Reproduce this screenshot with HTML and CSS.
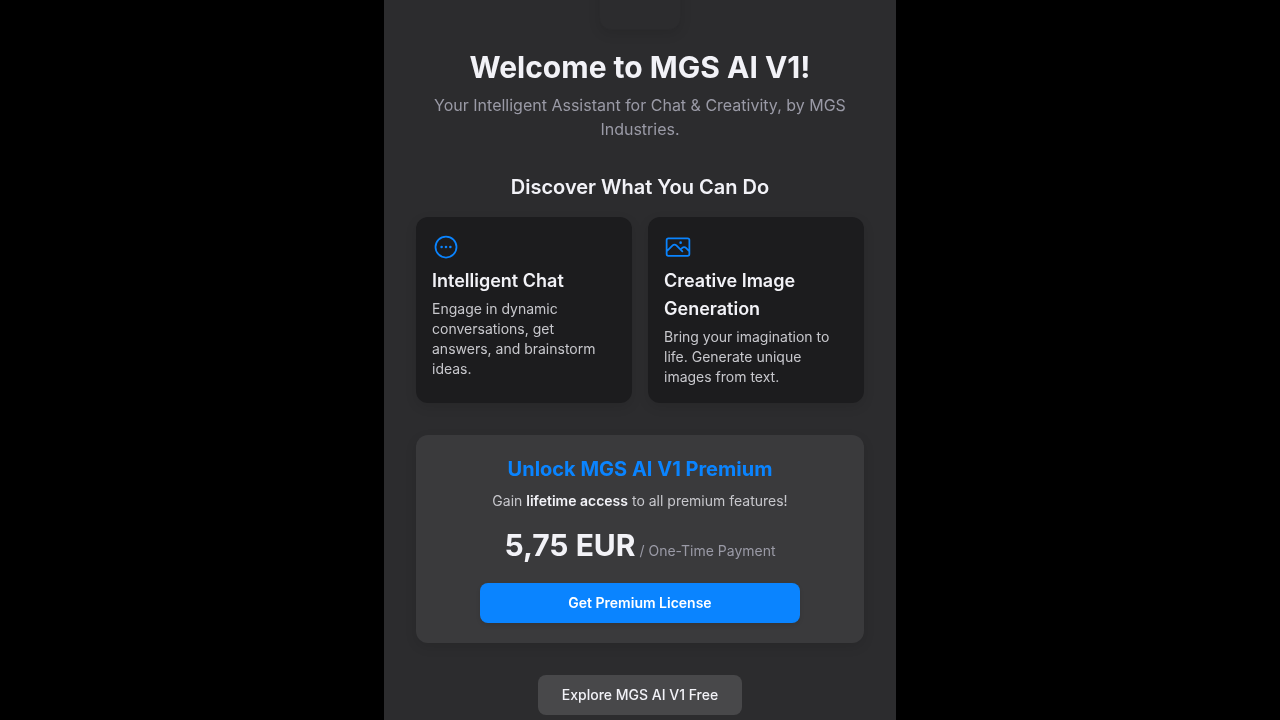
FILE: index.html
```html
<!DOCTYPE html>
<html lang="en">
<head>
<meta charset="utf-8">
<title>Welcome to MGS AI V1!</title>
<link rel="stylesheet" href="styles.css">
</head>
<body>
<main class="panel">
  <div class="content">
  <div class="logo"></div>
  <h1 class="title">Welcome to MGS AI V1!</h1>
  <p class="subtitle">Your Intelligent Assistant for Chat &amp; Creativity, by MGS Industries.</p>
  <h2 class="discover">Discover What You Can Do</h2>
  <section class="features">
    <article class="card">
      <svg class="icon" viewBox="0 0 24 24" fill="none" stroke="currentColor" stroke-width="1.5" stroke-linecap="round" stroke-linejoin="round"><path d="M8.625 12a.375.375 0 11-.75 0 .375.375 0 01.75 0zm0 0H8.25m4.125 0a.375.375 0 11-.75 0 .375.375 0 01.75 0zm0 0H12m4.125 0a.375.375 0 11-.75 0 .375.375 0 01.75 0zm0 0h-.375M21 12a9 9 0 11-18 0 9 9 0 0118 0z"/></svg>
      <h3 class="card-title">Intelligent Chat</h3>
      <p class="card-text">Engage in dynamic conversations, get answers, and brainstorm ideas.</p>
    </article>
    <article class="card">
      <svg class="icon" viewBox="0 0 24 24" fill="none" stroke="currentColor" stroke-width="1.5" stroke-linecap="round" stroke-linejoin="round"><path d="M2.25 15.75l5.159-5.159a2.25 2.25 0 013.182 0l5.159 5.159m-1.5-1.5l1.409-1.409a2.25 2.25 0 013.182 0l2.909 2.909m-18 3.75h16.5a1.5 1.5 0 001.5-1.5V6a1.5 1.5 0 00-1.5-1.5H3.75A1.5 1.5 0 002.25 6v12a1.5 1.5 0 001.5 1.5zm10.5-11.25h.008v.008h-.008V8.25zm.375 0a.375.375 0 11-.75 0 .375.375 0 01.75 0z"/></svg>
      <h3 class="card-title">Creative Image Generation</h3>
      <p class="card-text">Bring your imagination to life. Generate unique images from text.</p>
    </article>
  </section>
  <section class="premium">
    <h2 class="premium-title">Unlock MGS AI V1 Premium</h2>
    <p class="premium-text">Gain <strong>lifetime access</strong> to all premium features!</p>
    <p class="price"><span class="amount">5,75 EUR</span> <span class="term">/ One-Time Payment</span></p>
    <button class="btn btn-primary" type="button">Get Premium License</button>
  </section>
  <button class="btn btn-secondary" type="button">Explore MGS AI V1 Free</button>
  </div>
</main>
</body>
</html>
```

FILE: styles.css
```css
* { box-sizing: border-box; margin: 0; padding: 0; }
html, body { height: 100%; }
body {
  background: #000;
  display: flex;
  justify-content: center;
  overflow: hidden;
  font-family: Inter, "Liberation Sans", sans-serif;
  color: #f2f2f7;
}
.panel {
  width: 512px;
  height: 720px;
  flex: none;
  background: #2c2c2e;
  display: flex;
  flex-direction: column;
  justify-content: flex-end;
  overflow: hidden;
}
.content {
  flex: none;
  padding: 0 32px 5px;
  display: flex;
  flex-direction: column;
  align-items: center;
  text-align: center;
  will-change: transform;
}
.logo {
  width: 82px;
  height: 80px;
  flex: none;
  border-radius: 12px;
  background: #2c2c2e;
  border: 1px solid #2a2a2c;
  box-shadow: 0 4px 12px rgba(0, 0, 0, 0.1);
  margin-bottom: 17px;
}
.title { font-size: 30px; line-height: 40px; font-weight: 700; margin-bottom: 6px; }
.subtitle { font-size: 16px; line-height: 24px; color: #9a9aa6; margin-bottom: 32px; }
.discover { font-size: 20px; line-height: 28px; font-weight: 600; margin-bottom: 16px; }
.features {
  width: 100%;
  display: grid;
  grid-template-columns: 1fr 1fr;
  gap: 16px;
  text-align: left;
  margin-bottom: 32px;
}
.card {
  background: #1c1c1e;
  border-radius: 12px;
  padding: 16px;
  box-shadow: 0 4px 12px rgba(0, 0, 0, 0.1);
}
.icon { display: block; width: 28px; height: 28px; color: #0a84ff; margin-bottom: 6px; }
.card-title { font-size: 18px; line-height: 28px; font-weight: 600; margin-bottom: 4px; }
.card-text { font-size: 14px; line-height: 20px; color: #c7c7cc; }
.premium {
  width: 100%;
  background: #3a3a3c;
  border-radius: 12px;
  padding: 20px;
  display: flex;
  flex-direction: column;
  align-items: center;
  box-shadow: 0 4px 12px rgba(0, 0, 0, 0.1);
  margin-bottom: 32px;
}
.premium-title { font-size: 20px; line-height: 28px; font-weight: 700; color: #0a84ff; margin-bottom: 8px; }
.premium-text { font-size: 14px; line-height: 20px; color: #c7c7cc; margin-bottom: 14px; }
.premium-text strong { font-weight: 600; color: #f2f2f7; }
.price { font-size: 14px; line-height: 40px; margin-bottom: 12px; }
.amount { font-size: 30px; font-weight: 700; }
.term { font-size: 14px; color: #9a9aa6; }
.btn {
  height: 40px;
  border: none;
  border-radius: 8px;
  font-family: inherit;
  font-size: 14px;
  line-height: 20px;
}
.btn-primary {
  width: 320px;
  background: #0a84ff;
  color: #fff;
  font-weight: 600;
  box-shadow: 0 2px 4px rgba(0, 0, 0, 0.1);
}
.btn-secondary {
  flex: none;
  width: 204px;
  background: #48484a;
  color: #f2f2f7;
  font-weight: 500;
}
```
